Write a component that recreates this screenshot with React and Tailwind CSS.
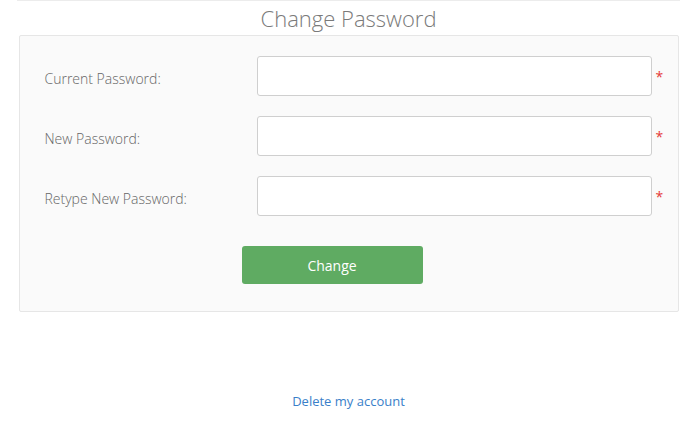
const fields = [
  { id: 'current', label: 'Current Password:' },
  { id: 'new', label: 'New Password:' },
  { id: 'retype', label: 'Retype New Password:' },
];

export default function App() {
  return (
    <div className="min-h-[446px] bg-white font-['Open_Sans',sans-serif]">
      <div className="mx-[17px] border-t border-[#ececec]" />
      <h1 className="mt-[2px] text-center text-[22px] font-light leading-[30px] text-[#7a7a7a]">
        Change Password
      </h1>
      <div className="mx-auto mt-[2px] w-[660px] rounded-[2px] border border-[#e6e6e6] bg-[#fafafa] pb-[27px] pt-[20px]">
        <div className="flex flex-col gap-[20px]">
          {fields.map((f) => (
            <div key={f.id} className="flex items-center">
              <label
                htmlFor={f.id}
                className="w-[237px] pl-[25px] pt-[4px] text-[14px] font-light text-[#666]"
              >
                {f.label}
              </label>
              <input
                id={f.id}
                type="password"
                className="h-[40px] w-[395px] rounded-[3px] border border-[#cfcfcf] bg-white px-3 outline-none"
              />
              <span className="ml-[4px] text-[14px] text-[#e53935]">*</span>
            </div>
          ))}
        </div>
        <div className="mt-[30px] pl-[222px]">
          <button className="h-[38px] w-[181px] rounded-[3px] bg-[#5fab62] text-[14px] text-white">
            Change
          </button>
        </div>
      </div>
      <div className="mt-[76px] text-center">
        <a href="#" className="text-[13px] text-[#3a7fc9]">
          Delete my account
        </a>
      </div>
    </div>
  );
}
